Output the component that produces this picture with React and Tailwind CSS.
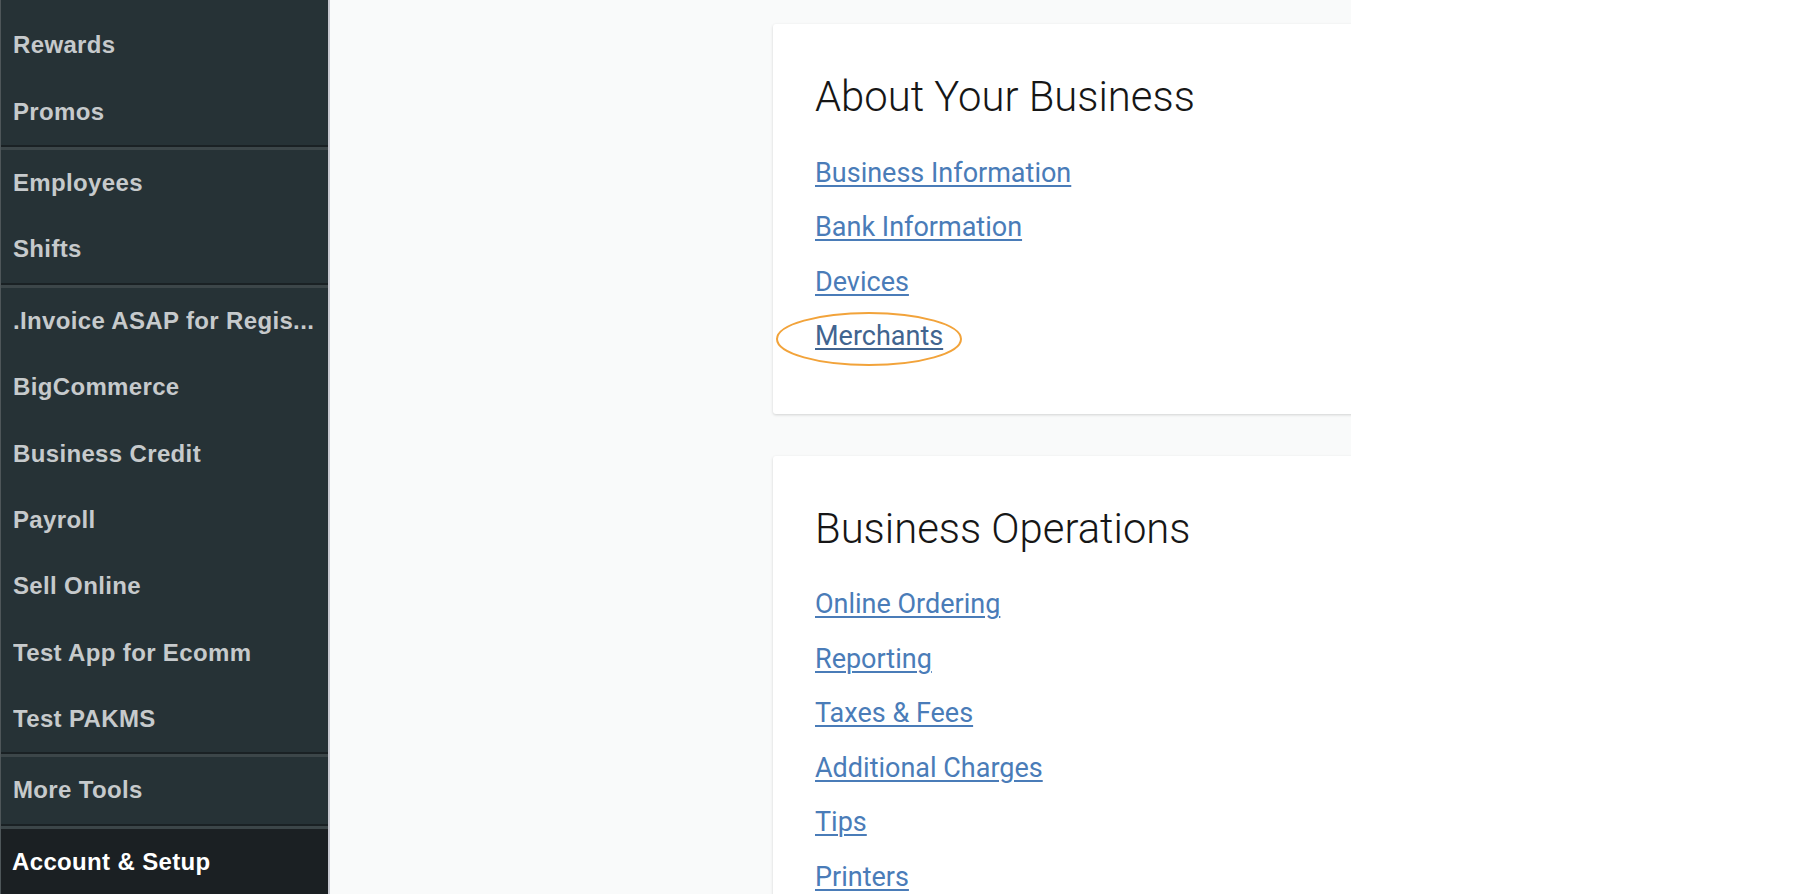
import React from "react";

const groups = [
  ["Rewards", "Promos"],
  ["Employees", "Shifts"],
  [
    ".Invoice ASAP for Regis...",
    "BigCommerce",
    "Business Credit",
    "Payroll",
    "Sell Online",
    "Test App for Ecomm",
    "Test PAKMS",
  ],
  ["More Tools"],
];

const sections = [
  {
    title: "About Your Business",
    links: ["Business Information", "Bank Information", "Devices", "Merchants"],
  },
  {
    title: "Business Operations",
    links: ["Online Ordering", "Reporting", "Taxes & Fees", "Additional Charges", "Tips", "Printers"],
  },
];

function NavItem({ label }) {
  return (
    <div className="h-[66.4px] flex items-center pl-[12px] pr-[10px] text-[24px] tracking-[0.35px] font-bold text-[#c6cacc] whitespace-nowrap overflow-hidden">
      <span className="truncate">{label}</span>
    </div>
  );
}

function Divider() {
  return <div className="h-[5px] border-t-2 border-[#1a2124] bg-[#3c4649]" />;
}

function Sidebar() {
  return (
    <aside
      className="w-[330px] shrink-0 h-full bg-[#263236] border-l border-[#4e5659] border-r-2 border-r-[#c7c8d0] flex flex-col pt-[12px]"
      style={{ fontFamily: '"Liberation Sans", Arial, sans-serif' }}
    >
      {groups.map((g, i) => (
        <div key={i}>
          {g.map((l) => (
            <NavItem key={l} label={l} />
          ))}
          <Divider />
        </div>
      ))}
      <div className="flex-1 bg-[#1b2023] pl-[11px]">
        <div className="h-[66.4px] flex items-center text-[24px] tracking-[0.35px] font-bold text-white">
          Account &amp; Setup
        </div>
      </div>
    </aside>
  );
}

function Card({ title, links }) {
  return (
    <div className="bg-white rounded-[3px] shadow-[0_1px_3px_rgba(0,0,0,0.16)] w-[800px] pl-[42px] pt-[49px] pb-[50px]">
      <h2 className="text-[41.8px] font-light leading-[48px] text-[#161616] mb-[24.5px]">{title}</h2>
      <div className="flex flex-col">
        {links.map((l) => (
          <div key={l} className="h-[54.5px] leading-[54.5px] text-[27px]">
            <a
              href="#"
              className={`relative underline decoration-[1.5px] underline-offset-[3px] ${
                l === "Merchants" ? "text-[#41648f]" : "text-[#4a7cb8]"
              }`}
            >
              {l}
              {l === "Merchants" && (
                <svg
                  className="absolute left-[-40px] top-[-9px] pointer-events-none"
                  width="190"
                  height="58"
                  viewBox="0 0 190 58"
                >
                  <ellipse cx="94" cy="28" rx="92" ry="26" fill="none" stroke="#f2a33a" strokeWidth="2" />
                </svg>
              )}
            </a>
          </div>
        ))}
      </div>
    </div>
  );
}

export default function App() {
  return (
    <div className="w-[1794px] h-[894px] flex bg-white overflow-hidden">
      <Sidebar />
      <main
        className="w-[1021px] h-full bg-[#f9fafa] overflow-hidden pl-[443px] pt-[24px] flex flex-col gap-[42px]"
        style={{ fontFamily: "Roboto, Arial, sans-serif" }}
      >
        {sections.map((s) => (
          <Card key={s.title} {...s} />
        ))}
      </main>
    </div>
  );
}
